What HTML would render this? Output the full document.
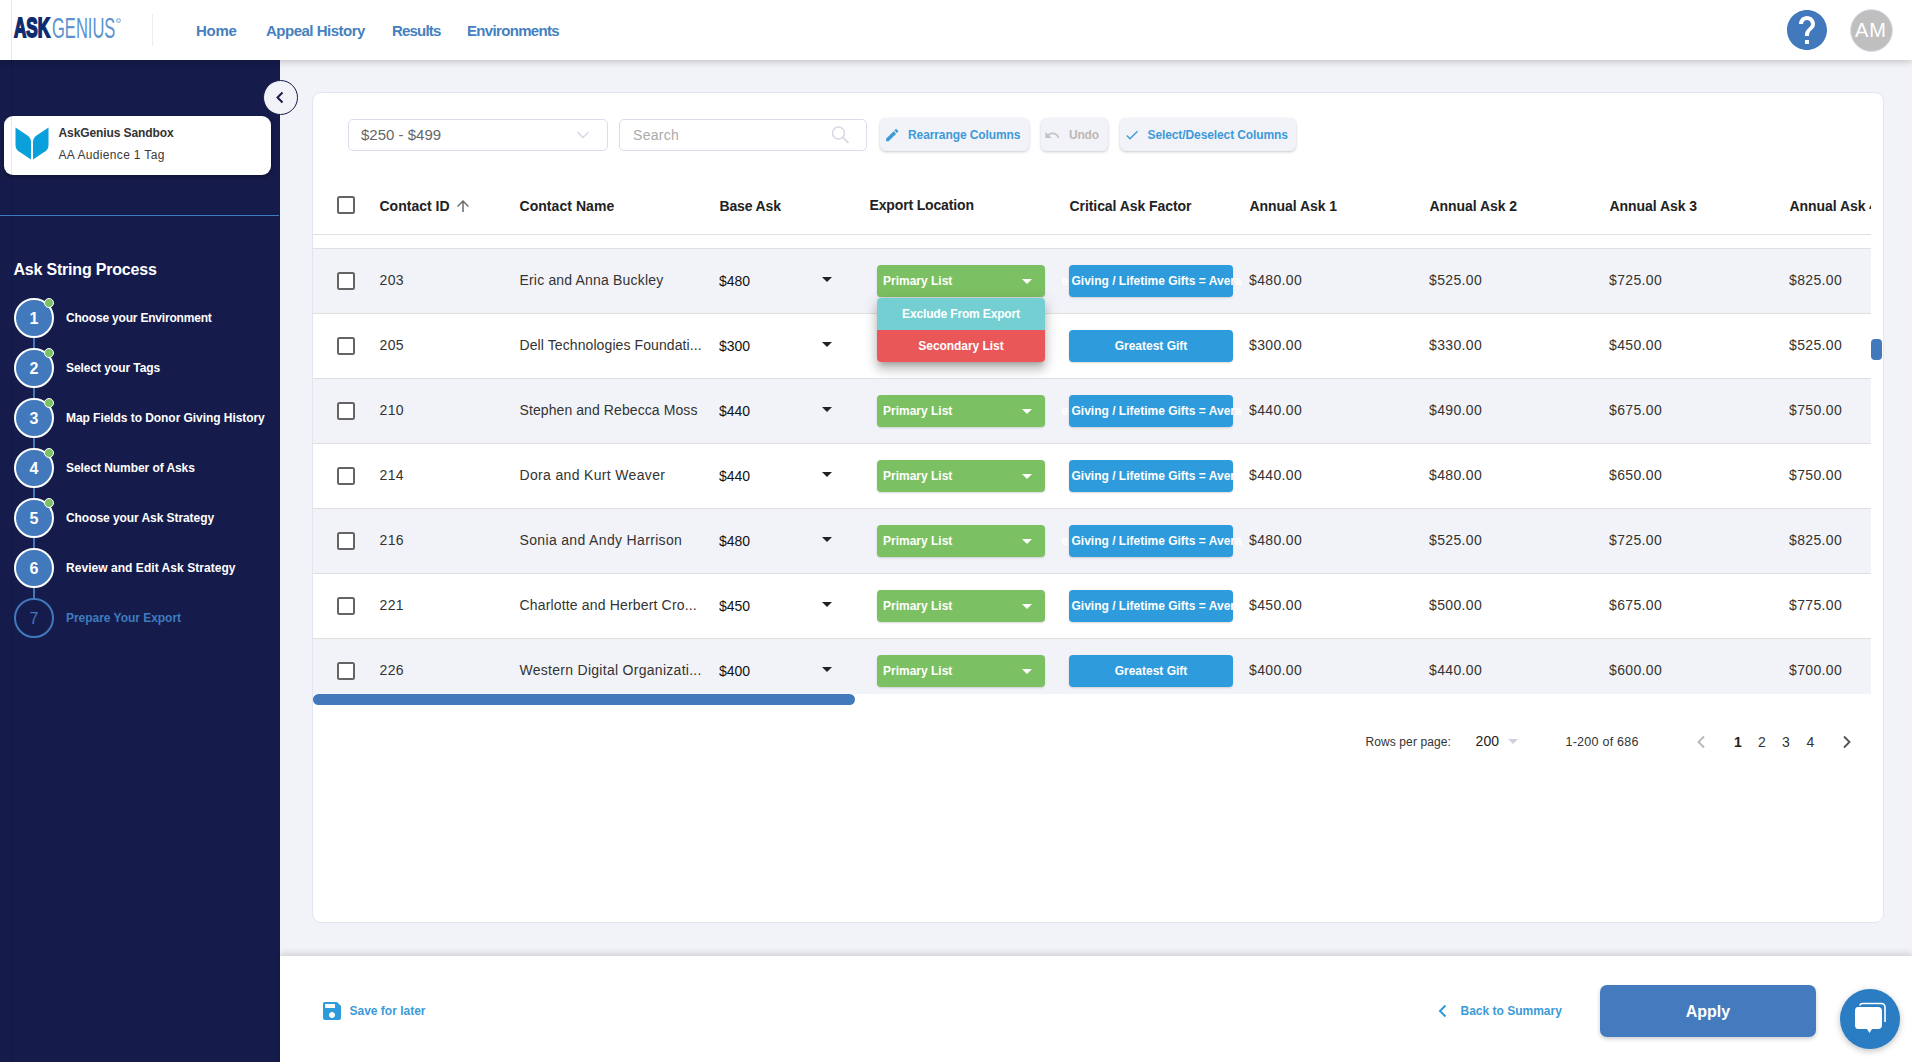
<!DOCTYPE html>
<html><head><meta charset="utf-8">
<style>
*{box-sizing:border-box;margin:0;padding:0}
html,body{width:1912px;height:1062px;overflow:hidden}
body{font-family:"Liberation Sans",sans-serif;background:#f2f3f8;position:relative;color:#222}
.abs{position:absolute}
#hdr{left:0;top:0;width:1912px;height:60px;background:#fff;box-shadow:0 2px 7px rgba(0,0,0,.19);z-index:5}
.nav{position:absolute;top:23px;font-size:15px;line-height:15px;font-weight:bold;color:#3f7bbf;white-space:nowrap}
#side{left:0;top:60px;width:280px;height:1002px;background:#151b4b}
.card{left:312px;top:92px;width:1572px;height:831px;background:#fff;border:1px solid #e3e4ef;border-radius:9px}
#foot{left:280px;top:956px;width:1632px;height:106px;background:#fff;box-shadow:0 -3px 6px rgba(0,0,0,.13)}
.step{position:absolute;left:14px;width:40px;height:40px;border-radius:50%;background:#4279bd;border:2px solid #fff}
.dot{position:absolute;left:44px;width:10px;height:10px;border-radius:50%;background:#7cc064;border:1.5px solid #fff}
.slabel{position:absolute;left:66px;font-size:13px;line-height:13px;font-weight:bold;color:#fff;white-space:nowrap}
.vline{position:absolute;left:33px;width:3px;background:#4279bd}
#tbl{position:absolute;left:0;top:0;width:1871px;height:694px;overflow:hidden}
.th{position:absolute;top:199px;font-size:15px;line-height:15px;font-weight:bold;color:#222;white-space:nowrap}
.row{position:absolute;left:313px;width:1558px;height:65px;border-bottom:1px solid #e0e0e0;background:#fff}
.row.alt{background:#f2f3f8}
.cb{position:absolute;left:337px;width:18px;height:18px;border:2px solid #646464;border-radius:2.5px;background:#fff}
.cell{position:absolute;font-size:15px;line-height:15px;color:#333;white-space:nowrap}
.cell.ar{color:#111;font-size:14px;line-height:14px}
.green{position:absolute;left:877px;width:168px;height:32px;background:#7bc063;border-radius:4px;box-shadow:0 1px 2px rgba(0,0,0,.15)}
.green:after{content:"";position:absolute;right:13px;top:14px;border-left:5px solid transparent;border-right:5px solid transparent;border-top:5px solid #fff}
.blue{position:absolute;left:1069px;width:164px;height:32px;background:#2e9bdc;border-radius:4px;box-shadow:0 1px 2px rgba(0,0,0,.15)}
.caret{position:absolute;left:822px;width:0;height:0;border-left:5px solid transparent;border-right:5px solid transparent;border-top:5px solid #222}
.tbtn{position:absolute;top:118px;height:33px;border-radius:6px;background:#f2f3f8;box-shadow:0 1px 3px rgba(0,0,0,.22);font-size:13px;line-height:33px;font-weight:bold;color:#3d9ad8;white-space:nowrap}
.t{position:absolute;white-space:nowrap}

</style></head><body>
<div id="hdr" class="abs">
<div class="abs" style="left:13px;top:12.5px;width:150px;height:30px"><span class="abs" style="left:0.5px;top:0.7px;font-size:27px;line-height:30px;font-weight:bold;color:#0d2b6f;-webkit-text-stroke:1.8px #0d2b6f;transform:scaleX(0.633);transform-origin:0 0">ASK</span><span class="abs" style="left:39px;top:0.5px;font-size:30px;line-height:30px;color:#5b92d0;transform:scaleX(0.551);transform-origin:0 0">GENIUS</span><span class="abs" style="left:103px;top:5px;width:5px;height:5px;border-radius:50%;border:1.2px solid #8cb2de;background:#dbe7f5"></span></div>
<div class="abs" style="left:152px;top:14px;width:1px;height:32px;background:#ececec"></div>
<div class="t" style="left:196px;top:22.80px;font-size:15px;line-height:15px;color:#4580c0;font-weight:bold;letter-spacing:-0.3px;">Home</div>
<div class="t" style="left:266px;top:22.80px;font-size:15px;line-height:15px;color:#4580c0;font-weight:bold;letter-spacing:-0.5px;">Appeal History</div>
<div class="t" style="left:392px;top:22.80px;font-size:15px;line-height:15px;color:#4580c0;font-weight:bold;letter-spacing:-0.8px;">Results</div>
<div class="t" style="left:467px;top:22.80px;font-size:15px;line-height:15px;color:#4580c0;font-weight:bold;letter-spacing:-0.67px;">Environments</div>
<svg class="abs" style="left:1783px;top:6px" width="48" height="48" viewBox="0 0 24 24"><path fill="#4279bd" d="M12 2C6.48 2 2 6.48 2 12s4.48 10 10 10 10-4.48 10-10S17.52 2 12 2zm1 17h-2v-2h2v2zm2.07-7.75l-.9.92C13.45 12.9 13 13.5 13 15h-2v-.5c0-1.1.45-2.1 1.17-2.83l1.24-1.26c.37-.36.59-.86.59-1.41 0-1.1-.9-2-2-2s-2 .9-2 2H8c0-2.21 1.79-4 4-4s4 1.79 4 4c0 .88-.36 1.68-.93 2.25z"/></svg>
<div class="abs" style="left:1850px;top:9px;width:43px;height:43px;border-radius:50%;background:#bfbfbf;border:1px solid #e2e0f0"></div>
<div class="t" style="left:1855px;top:20.07px;font-size:20px;line-height:20px;color:#fff;letter-spacing:1px;">AM</div>
</div>
<div id="side" class="abs"></div>
<div class="abs" style="left:4px;top:116px;width:267px;height:59px;background:#fff;border-radius:9px;box-shadow:0 2px 4px rgba(0,0,0,.35)"></div>
<svg class="abs" style="left:15px;top:127px" width="34" height="33" viewBox="0 0 34 33"><path fill="#0aa0dc" d="M0.5 0.5 L12.5 8.5 Q16 11 16 15 L16 32.5 L4 24.5 Q0.5 22 0.5 18 Z"/><path fill="#0aa0dc" d="M33.5 0.5 L21.5 8.5 Q18 11 18 15 L18 32.5 L30 24.5 Q33.5 22 33.5 18 Z"/></svg>
<div class="t" style="left:58.5px;top:126.84px;font-size:12px;line-height:12px;color:#333;font-weight:bold;letter-spacing:-0.1px;">AskGenius Sandbox</div>
<div class="t" style="left:58.5px;top:148.54px;font-size:12px;line-height:12px;color:#3a3a3a;letter-spacing:0.33px;">AA Audience 1 Tag</div>
<div class="abs" style="left:0;top:215px;width:279px;height:1px;background:#3f7bbf"></div>
<div class="t" style="left:13.5px;top:262.46px;font-size:16px;line-height:16px;color:#fff;font-weight:bold;letter-spacing:-0.2px;">Ask String Process</div>
<div class="abs" style="left:33px;top:330px;width:2px;height:280px;background:#4279bd"></div>
<div class="step" style="top:298px"></div>
<div class="t" style="left:0px;top:311.46px;font-size:16px;line-height:16px;color:#fff;font-weight:bold;width:68px;text-align:center;">1</div>
<div class="dot" style="top:297.5px"></div>
<div class="t" style="left:66px;top:311.84px;font-size:12px;line-height:12px;color:#fff;font-weight:bold;letter-spacing:-0.189px;">Choose your Environment</div>
<div class="step" style="top:348px"></div>
<div class="t" style="left:0px;top:361.46px;font-size:16px;line-height:16px;color:#fff;font-weight:bold;width:68px;text-align:center;">2</div>
<div class="dot" style="top:347.5px"></div>
<div class="t" style="left:66px;top:361.84px;font-size:12px;line-height:12px;color:#fff;font-weight:bold;letter-spacing:-0.057px;">Select your Tags</div>
<div class="step" style="top:398px"></div>
<div class="t" style="left:0px;top:411.46px;font-size:16px;line-height:16px;color:#fff;font-weight:bold;width:68px;text-align:center;">3</div>
<div class="dot" style="top:397.5px"></div>
<div class="t" style="left:66px;top:411.84px;font-size:12px;line-height:12px;color:#fff;font-weight:bold;letter-spacing:-0.057px;">Map Fields to Donor Giving History</div>
<div class="step" style="top:448px"></div>
<div class="t" style="left:0px;top:461.46px;font-size:16px;line-height:16px;color:#fff;font-weight:bold;width:68px;text-align:center;">4</div>
<div class="dot" style="top:447.5px"></div>
<div class="t" style="left:66px;top:461.84px;font-size:12px;line-height:12px;color:#fff;font-weight:bold;letter-spacing:-0.07px;">Select Number of Asks</div>
<div class="step" style="top:498px"></div>
<div class="t" style="left:0px;top:511.46px;font-size:16px;line-height:16px;color:#fff;font-weight:bold;width:68px;text-align:center;">5</div>
<div class="dot" style="top:497.5px"></div>
<div class="t" style="left:66px;top:511.84px;font-size:12px;line-height:12px;color:#fff;font-weight:bold;letter-spacing:-0.065px;">Choose your Ask Strategy</div>
<div class="step" style="top:548px"></div>
<div class="t" style="left:0px;top:561.46px;font-size:16px;line-height:16px;color:#fff;font-weight:bold;width:68px;text-align:center;">6</div>
<div class="t" style="left:66px;top:561.84px;font-size:12px;line-height:12px;color:#fff;font-weight:bold;letter-spacing:0.044px;">Review and Edit Ask Strategy</div>
<div class="step" style="top:598px;background:#151b4b;border-color:#4279bd"></div>
<div class="t" style="left:0px;top:611.46px;font-size:16px;line-height:16px;color:#4279bd;width:68px;text-align:center;">7</div>
<div class="t" style="left:66px;top:611.84px;font-size:12px;line-height:12px;color:#3f7bbf;font-weight:bold;letter-spacing:-0.03px;">Prepare Your Export</div>
<div class="abs card"></div>
<div class="abs" style="left:263px;top:80px;width:35px;height:35px;border-radius:50%;background:#f2f3f8;border:1px solid #171b4b"></div>
<svg class="abs" style="left:263px;top:80px" width="35" height="35" viewBox="0 0 35 35"><path d="M19.5 12.5 L14.5 17.5 L19.5 22.5" fill="none" stroke="#171b4b" stroke-width="2"/></svg>
<div class="abs" style="left:348px;top:119px;width:260px;height:32px;border:1px solid #dddbeb;border-radius:5px;background:#fff"></div>
<div class="t" style="left:361px;top:127.40px;font-size:15px;line-height:15px;color:#666;">$250 - $499</div>
<svg class="abs" style="left:576px;top:130px" width="14" height="10" viewBox="0 0 14 10"><path d="M1.5 2 L7 7.5 L12.5 2" fill="none" stroke="#d6d6e4" stroke-width="1.4"/></svg>
<div class="abs" style="left:619px;top:119px;width:248px;height:32px;border:1px solid #dddbeb;border-radius:5px;background:#fff"></div>
<div class="t" style="left:633px;top:128.35px;font-size:14px;line-height:14px;color:#aaa;letter-spacing:0.3px;">Search</div>
<svg class="abs" style="left:830px;top:125px" width="20" height="20" viewBox="0 0 20 20"><circle cx="8.5" cy="8" r="6" fill="none" stroke="#d8d8e6" stroke-width="1.6"/><path d="M13 12.5 L18.5 18" stroke="#d8d8e6" stroke-width="1.8"/></svg>
<div class="tbtn" style="left:880px;width:149px"></div>
<div class="tbtn" style="left:1041px;width:67px"></div>
<div class="tbtn" style="left:1120px;width:176px"></div>
<div class="t" style="left:908px;top:128.54px;font-size:12px;line-height:12px;color:#3d9ad8;font-weight:bold;letter-spacing:-0.1px;">Rearrange Columns</div>
<svg class="abs" style="left:883.7px;top:127px" width="16.4" height="16.4" viewBox="0 0 24 24"><path fill="#3d9ad8" d="M3 17.25V21h3.75L17.81 9.94l-3.75-3.75L3 17.25zM20.71 7.04c.39-.39.39-1.02 0-1.41l-2.34-2.34c-.39-.39-1.02-.39-1.41 0l-1.83 1.83 3.75 3.75 1.83-1.83z"/></svg>
<div class="t" style="left:1069px;top:128.54px;font-size:12px;line-height:12px;color:#bdb8b4;font-weight:bold;letter-spacing:-0.2px;">Undo</div>
<svg class="abs" style="left:1044.4px;top:126.8px" width="16.4" height="16.4" viewBox="0 0 24 24"><path fill="#c2c2c2" d="M12.5 8c-2.65 0-5.05.99-6.9 2.6L2 7v9h9l-3.62-3.62c1.39-1.16 3.16-1.88 5.12-1.88 3.54 0 6.55 2.31 7.6 5.5l2.37-.78C21.08 11.03 17.15 8 12.5 8z"/></svg>
<div class="t" style="left:1147.5px;top:128.64px;font-size:12px;line-height:12px;color:#3d9ad8;font-weight:bold;letter-spacing:-0.1px;">Select/Deselect Columns</div>
<svg class="abs" style="left:1124px;top:127px" width="16" height="16" viewBox="0 0 24 24"><path fill="#3d9ad8" d="M9 16.17L4.83 12l-1.42 1.41L9 19 21 7l-1.41-1.41z"/></svg>
<div id="tbl">
<div class="cb" style="top:196px;background:#fff"></div>
<div class="t" style="left:379.5px;top:199.15px;font-size:14px;line-height:14px;color:#222;font-weight:bold;">Contact ID</div>
<div class="t" style="left:519.5px;top:199.15px;font-size:14px;line-height:14px;color:#222;font-weight:bold;letter-spacing:0.05px;">Contact Name</div>
<div class="t" style="left:719.5px;top:199.15px;font-size:14px;line-height:14px;color:#222;font-weight:bold;letter-spacing:-0.15px;">Base Ask</div>
<div class="t" style="left:869.5px;top:198.15px;font-size:14px;line-height:14px;color:#222;font-weight:bold;letter-spacing:-0.15px;">Export Location</div>
<div class="t" style="left:1069.5px;top:199.15px;font-size:14px;line-height:14px;color:#222;font-weight:bold;letter-spacing:-0.07px;">Critical Ask Factor</div>
<div class="t" style="left:1249.5px;top:199.15px;font-size:14px;line-height:14px;color:#222;font-weight:bold;letter-spacing:-0.05px;">Annual Ask 1</div>
<div class="t" style="left:1429.5px;top:199.15px;font-size:14px;line-height:14px;color:#222;font-weight:bold;letter-spacing:-0.05px;">Annual Ask 2</div>
<div class="t" style="left:1609.5px;top:199.15px;font-size:14px;line-height:14px;color:#222;font-weight:bold;letter-spacing:-0.05px;">Annual Ask 3</div>
<div class="t" style="left:1789.5px;top:199.15px;font-size:14px;line-height:14px;color:#222;font-weight:bold;letter-spacing:-0.05px;">Annual Ask 4</div>
<svg class="abs" style="left:454px;top:197px" width="18" height="18" viewBox="0 0 24 24"><path fill="#6b6b6b" d="M4 12l1.41 1.41L11 7.83V20h2V7.83l5.58 5.59L20 12l-8-8-8 8z"/></svg>
<div class="abs" style="left:313px;top:234px;width:1558px;height:1px;background:#e0e0e0"></div>
<div class="abs" style="left:313px;top:248px;width:1558px;height:1px;background:#e0e0e0"></div>
<div class="row alt" style="top:249px;height:65px"></div>
<div class="cb" style="top:272px"></div>
<div class="t" style="left:379.5px;top:273.15px;font-size:14px;line-height:14px;color:#333;letter-spacing:0.4px;">203</div>
<div class="t" style="left:519.5px;top:273.15px;font-size:14px;line-height:14px;color:#333;letter-spacing:0.18px;">Eric and Anna Buckley</div>
<div class="t" style="left:719px;top:273.95px;font-size:14px;line-height:14px;color:#111;">$480</div>
<div class="caret" style="top:277px"></div>
<div class="green" style="top:265px"></div>
<div class="t" style="left:883px;top:274.84px;font-size:12px;line-height:12px;color:#fff;font-weight:bold;">Primary List</div>
<div class="blue" style="top:265px"></div>
<div class="t" style="left:1061.5px;top:274.84px;font-size:12px;line-height:12px;color:#fff;font-weight:bold;">e Giving / Lifetime Gifts = Avera</div>
<div class="t" style="left:1249px;top:273.15px;font-size:14px;line-height:14px;color:#333;letter-spacing:0.35px;">$480.00</div>
<div class="t" style="left:1429px;top:273.15px;font-size:14px;line-height:14px;color:#333;letter-spacing:0.35px;">$525.00</div>
<div class="t" style="left:1609px;top:273.15px;font-size:14px;line-height:14px;color:#333;letter-spacing:0.35px;">$725.00</div>
<div class="t" style="left:1789px;top:273.15px;font-size:14px;line-height:14px;color:#333;letter-spacing:0.35px;">$825.00</div>
<div class="row" style="top:314px;height:65px"></div>
<div class="cb" style="top:337px"></div>
<div class="t" style="left:379.5px;top:338.15px;font-size:14px;line-height:14px;color:#333;letter-spacing:0.4px;">205</div>
<div class="t" style="left:519.5px;top:338.15px;font-size:14px;line-height:14px;color:#333;letter-spacing:0.093px;">Dell Technologies Foundati...</div>
<div class="t" style="left:719px;top:338.95px;font-size:14px;line-height:14px;color:#111;">$300</div>
<div class="caret" style="top:342px"></div>
<div class="blue" style="top:330px"></div>
<div class="t" style="left:1069px;top:340.34px;font-size:12px;line-height:12px;color:#fff;font-weight:bold;width:164px;text-align:center;">Greatest Gift</div>
<div class="t" style="left:1249px;top:338.15px;font-size:14px;line-height:14px;color:#333;letter-spacing:0.35px;">$300.00</div>
<div class="t" style="left:1429px;top:338.15px;font-size:14px;line-height:14px;color:#333;letter-spacing:0.35px;">$330.00</div>
<div class="t" style="left:1609px;top:338.15px;font-size:14px;line-height:14px;color:#333;letter-spacing:0.35px;">$450.00</div>
<div class="t" style="left:1789px;top:338.15px;font-size:14px;line-height:14px;color:#333;letter-spacing:0.35px;">$525.00</div>
<div class="row alt" style="top:379px;height:65px"></div>
<div class="cb" style="top:402px"></div>
<div class="t" style="left:379.5px;top:403.15px;font-size:14px;line-height:14px;color:#333;letter-spacing:0.4px;">210</div>
<div class="t" style="left:519.5px;top:403.15px;font-size:14px;line-height:14px;color:#333;letter-spacing:0.087px;">Stephen and Rebecca Moss</div>
<div class="t" style="left:719px;top:403.95px;font-size:14px;line-height:14px;color:#111;">$440</div>
<div class="caret" style="top:407px"></div>
<div class="green" style="top:395px"></div>
<div class="t" style="left:883px;top:404.84px;font-size:12px;line-height:12px;color:#fff;font-weight:bold;">Primary List</div>
<div class="blue" style="top:395px"></div>
<div class="t" style="left:1061.5px;top:404.84px;font-size:12px;line-height:12px;color:#fff;font-weight:bold;">e Giving / Lifetime Gifts = Avera</div>
<div class="t" style="left:1249px;top:403.15px;font-size:14px;line-height:14px;color:#333;letter-spacing:0.35px;">$440.00</div>
<div class="t" style="left:1429px;top:403.15px;font-size:14px;line-height:14px;color:#333;letter-spacing:0.35px;">$490.00</div>
<div class="t" style="left:1609px;top:403.15px;font-size:14px;line-height:14px;color:#333;letter-spacing:0.35px;">$675.00</div>
<div class="t" style="left:1789px;top:403.15px;font-size:14px;line-height:14px;color:#333;letter-spacing:0.35px;">$750.00</div>
<div class="row" style="top:444px;height:65px"></div>
<div class="cb" style="top:467px"></div>
<div class="t" style="left:379.5px;top:468.15px;font-size:14px;line-height:14px;color:#333;letter-spacing:0.4px;">214</div>
<div class="t" style="left:519.5px;top:468.15px;font-size:14px;line-height:14px;color:#333;letter-spacing:0.337px;">Dora and Kurt Weaver</div>
<div class="t" style="left:719px;top:468.95px;font-size:14px;line-height:14px;color:#111;">$440</div>
<div class="caret" style="top:472px"></div>
<div class="green" style="top:460px"></div>
<div class="t" style="left:883px;top:469.84px;font-size:12px;line-height:12px;color:#fff;font-weight:bold;">Primary List</div>
<div class="blue" style="top:460px"></div>
<div class="t" style="left:1061.5px;top:469.84px;font-size:12px;line-height:12px;color:#fff;font-weight:bold;">e Giving / Lifetime Gifts = Avera</div>
<div class="t" style="left:1249px;top:468.15px;font-size:14px;line-height:14px;color:#333;letter-spacing:0.35px;">$440.00</div>
<div class="t" style="left:1429px;top:468.15px;font-size:14px;line-height:14px;color:#333;letter-spacing:0.35px;">$480.00</div>
<div class="t" style="left:1609px;top:468.15px;font-size:14px;line-height:14px;color:#333;letter-spacing:0.35px;">$650.00</div>
<div class="t" style="left:1789px;top:468.15px;font-size:14px;line-height:14px;color:#333;letter-spacing:0.35px;">$750.00</div>
<div class="row alt" style="top:509px;height:65px"></div>
<div class="cb" style="top:532px"></div>
<div class="t" style="left:379.5px;top:533.15px;font-size:14px;line-height:14px;color:#333;letter-spacing:0.4px;">216</div>
<div class="t" style="left:519.5px;top:533.15px;font-size:14px;line-height:14px;color:#333;letter-spacing:0.341px;">Sonia and Andy Harrison</div>
<div class="t" style="left:719px;top:533.95px;font-size:14px;line-height:14px;color:#111;">$480</div>
<div class="caret" style="top:537px"></div>
<div class="green" style="top:525px"></div>
<div class="t" style="left:883px;top:534.84px;font-size:12px;line-height:12px;color:#fff;font-weight:bold;">Primary List</div>
<div class="blue" style="top:525px"></div>
<div class="t" style="left:1061.5px;top:534.84px;font-size:12px;line-height:12px;color:#fff;font-weight:bold;">e Giving / Lifetime Gifts = Avera</div>
<div class="t" style="left:1249px;top:533.15px;font-size:14px;line-height:14px;color:#333;letter-spacing:0.35px;">$480.00</div>
<div class="t" style="left:1429px;top:533.15px;font-size:14px;line-height:14px;color:#333;letter-spacing:0.35px;">$525.00</div>
<div class="t" style="left:1609px;top:533.15px;font-size:14px;line-height:14px;color:#333;letter-spacing:0.35px;">$725.00</div>
<div class="t" style="left:1789px;top:533.15px;font-size:14px;line-height:14px;color:#333;letter-spacing:0.35px;">$825.00</div>
<div class="row" style="top:574px;height:65px"></div>
<div class="cb" style="top:597px"></div>
<div class="t" style="left:379.5px;top:598.15px;font-size:14px;line-height:14px;color:#333;letter-spacing:0.4px;">221</div>
<div class="t" style="left:519.5px;top:598.15px;font-size:14px;line-height:14px;color:#333;letter-spacing:0.163px;">Charlotte and Herbert Cro...</div>
<div class="t" style="left:719px;top:598.95px;font-size:14px;line-height:14px;color:#111;">$450</div>
<div class="caret" style="top:602px"></div>
<div class="green" style="top:590px"></div>
<div class="t" style="left:883px;top:599.84px;font-size:12px;line-height:12px;color:#fff;font-weight:bold;">Primary List</div>
<div class="blue" style="top:590px"></div>
<div class="t" style="left:1061.5px;top:599.84px;font-size:12px;line-height:12px;color:#fff;font-weight:bold;">e Giving / Lifetime Gifts = Avera</div>
<div class="t" style="left:1249px;top:598.15px;font-size:14px;line-height:14px;color:#333;letter-spacing:0.35px;">$450.00</div>
<div class="t" style="left:1429px;top:598.15px;font-size:14px;line-height:14px;color:#333;letter-spacing:0.35px;">$500.00</div>
<div class="t" style="left:1609px;top:598.15px;font-size:14px;line-height:14px;color:#333;letter-spacing:0.35px;">$675.00</div>
<div class="t" style="left:1789px;top:598.15px;font-size:14px;line-height:14px;color:#333;letter-spacing:0.35px;">$775.00</div>
<div class="row alt" style="top:639px;height:55px;border-bottom:none"></div>
<div class="cb" style="top:662px"></div>
<div class="t" style="left:379.5px;top:663.15px;font-size:14px;line-height:14px;color:#333;letter-spacing:0.4px;">226</div>
<div class="t" style="left:519.5px;top:663.15px;font-size:14px;line-height:14px;color:#333;letter-spacing:0.282px;">Western Digital Organizati...</div>
<div class="t" style="left:719px;top:663.95px;font-size:14px;line-height:14px;color:#111;">$400</div>
<div class="caret" style="top:667px"></div>
<div class="green" style="top:655px"></div>
<div class="t" style="left:883px;top:664.84px;font-size:12px;line-height:12px;color:#fff;font-weight:bold;">Primary List</div>
<div class="blue" style="top:655px"></div>
<div class="t" style="left:1069px;top:665.34px;font-size:12px;line-height:12px;color:#fff;font-weight:bold;width:164px;text-align:center;">Greatest Gift</div>
<div class="t" style="left:1249px;top:663.15px;font-size:14px;line-height:14px;color:#333;letter-spacing:0.35px;">$400.00</div>
<div class="t" style="left:1429px;top:663.15px;font-size:14px;line-height:14px;color:#333;letter-spacing:0.35px;">$440.00</div>
<div class="t" style="left:1609px;top:663.15px;font-size:14px;line-height:14px;color:#333;letter-spacing:0.35px;">$600.00</div>
<div class="t" style="left:1789px;top:663.15px;font-size:14px;line-height:14px;color:#333;letter-spacing:0.35px;">$700.00</div>
</div>
<div class="abs" style="left:313px;top:694px;width:542px;height:11px;border-radius:6px;background:#4279bd"></div>
<div class="abs" style="left:1871px;top:339px;width:11px;height:21px;border-radius:4px;background:#4279bd"></div>
<div class="abs" style="left:877px;top:298px;width:168px;height:64px;border-radius:4px;box-shadow:0 5px 5px -3px rgba(0,0,0,.2),0 8px 10px 1px rgba(0,0,0,.14),0 3px 14px 2px rgba(0,0,0,.12);overflow:hidden;z-index:3"><div style="height:32px;background:#74cfd3"></div><div style="height:32px;background:#e95758"></div></div>
<div class="t" style="left:877px;top:307.64px;font-size:12px;line-height:12px;color:#fff;font-weight:bold;letter-spacing:-0.15px;width:168px;text-align:center;z-index:4;">Exclude From Export</div>
<div class="t" style="left:877px;top:339.94px;font-size:12px;line-height:12px;color:#fff;font-weight:bold;letter-spacing:-0.05px;width:168px;text-align:center;z-index:4;">Secondary List</div>
<div class="t" style="left:1365.5px;top:735.84px;font-size:12px;line-height:12px;color:#333;letter-spacing:0.1px;">Rows per page:</div>
<div class="t" style="left:1475.5px;top:734.15px;font-size:14px;line-height:14px;color:#222;letter-spacing:0.1px;">200</div>
<div class="abs" style="left:1508px;top:739px;width:0;height:0;border-left:5px solid transparent;border-right:5px solid transparent;border-top:5px solid #d0d0e0"></div>
<div class="t" style="left:1565.5px;top:736.42px;font-size:12.5px;line-height:12.5px;color:#333;letter-spacing:0.25px;">1-200 of 686</div>
<svg class="abs" style="left:1693px;top:734px" width="16" height="16" viewBox="0 0 16 16"><path d="M11 2.5 L5.5 8 L11 13.5" fill="none" stroke="#b8b8b8" stroke-width="1.9"/></svg>
<div class="t" style="left:1734px;top:735.15px;font-size:14px;line-height:14px;color:#222;font-weight:bold;">1</div>
<div class="t" style="left:1758px;top:735.15px;font-size:14px;line-height:14px;color:#333;">2</div>
<div class="t" style="left:1782px;top:735.15px;font-size:14px;line-height:14px;color:#333;">3</div>
<div class="t" style="left:1806.5px;top:735.15px;font-size:14px;line-height:14px;color:#333;">4</div>
<svg class="abs" style="left:1839px;top:734px" width="16" height="16" viewBox="0 0 16 16"><path d="M5 2.5 L10.5 8 L5 13.5" fill="none" stroke="#555" stroke-width="1.9"/></svg>
<div id="foot" class="abs"></div>
<svg class="abs" style="left:320px;top:999px" width="24" height="24" viewBox="0 0 24 24"><path fill="#2e9bdc" d="M17 3H5c-1.11 0-2 .9-2 2v14c0 1.1.89 2 2 2h14c1.1 0 2-.9 2-2V7l-4-4zm-5 16c-1.66 0-3-1.34-3-3s1.34-3 3-3 3 1.34 3 3-1.34 3-3 3zm3-10H5V5h10v4z"/></svg>
<div class="t" style="left:349.5px;top:1004.84px;font-size:12px;line-height:12px;color:#3d9ad8;font-weight:bold;">Save for later</div>
<svg class="abs" style="left:1436px;top:1003px" width="14" height="16" viewBox="0 0 14 16"><path d="M9.5 2.5 L4 8 L9.5 13.5" fill="none" stroke="#2e9bdc" stroke-width="2"/></svg>
<div class="t" style="left:1460.5px;top:1004.64px;font-size:12px;line-height:12px;color:#3d9ad8;font-weight:bold;">Back to Summary</div>
<div class="abs" style="left:1600px;top:985px;width:216px;height:52px;border-radius:7px;background:#437bbe;box-shadow:0 2px 4px rgba(0,0,0,.2)"></div>
<div class="t" style="left:1600px;top:1004.46px;font-size:16px;line-height:16px;color:#fff;font-weight:bold;width:216px;text-align:center;">Apply</div>
<div class="abs" style="left:1840px;top:989px;width:60px;height:60px;border-radius:50%;background:#2a7dc2;box-shadow:0 2px 6px rgba(0,0,0,.25)"></div>
<svg class="abs" style="left:1852px;top:1001px" width="36" height="36" viewBox="0 0 36 36"><path d="M8 4.5 Q8 2.5 11 2.5 L29 2.5 Q33 2.5 33 6.5 L33 21" fill="none" stroke="#fff" stroke-width="1.6"/><path fill="#fff" d="M6 6 L26 6 Q30 6 30 10 L30 24 Q30 28 26 28 L20 28 L17.5 32 L15 28 L6 28 Q3 28 3 24 L3 10 Q3 6 6 6 Z"/></svg>
<div class="abs" style="left:11px;top:0;width:1px;height:1062px;background:rgba(0,0,0,.09);z-index:10"></div>
</body></html>
